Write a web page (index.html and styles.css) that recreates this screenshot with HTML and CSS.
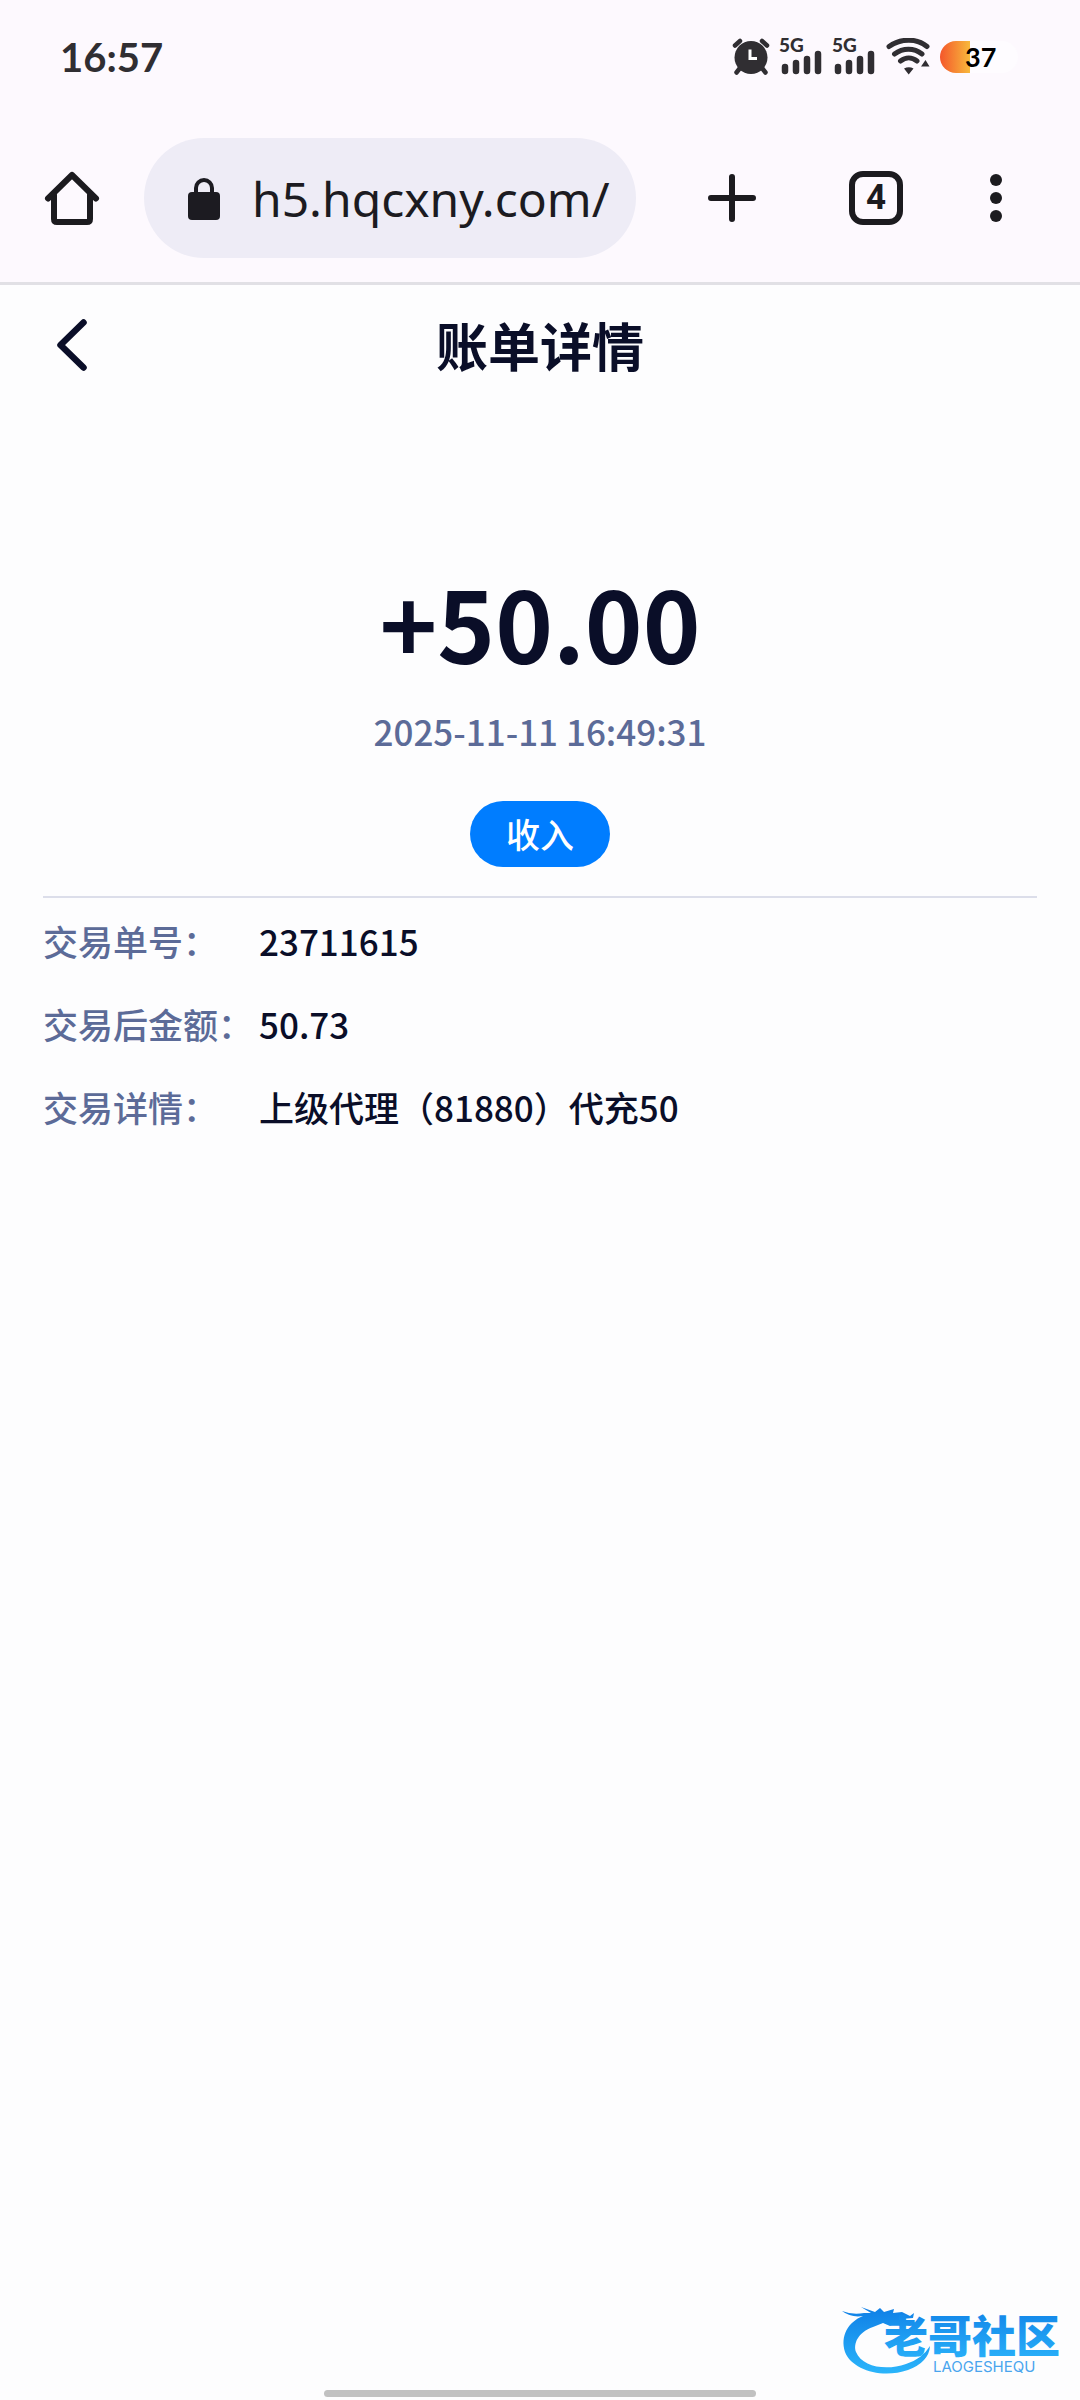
FILE: index.html
```html
<!DOCTYPE html>
<html lang="zh-CN">
<head>
<meta charset="utf-8">
<meta name="viewport" content="width=device-width, initial-scale=1">
<title>账单详情</title>
<link rel="stylesheet" href="styles.css">
</head>
<body>
<header class="browser">
  <div class="status">
    <time class="clock">16:57</time>
    <div class="indicators">
      <svg width="38" height="38" viewBox="0 0 38 38" aria-label="闹钟">
        <g stroke="#302e32" stroke-width="4.500" stroke-linecap="round" fill="none">
          <path d="M3 7.500L8 3M35 7.500L30 3M8 30L4.500 34.500M30 30L33.500 34.500"/>
        </g>
        <circle cx="19" cy="19.500" r="16.500" fill="#302e32"/>
        <path d="M18 11.500V20.500H25" fill="none" stroke="#fff" stroke-width="3"/>
      </svg>
      <svg class="signal" width="43" height="54" viewBox="0 -8 43 54" aria-label="5G信号">
        <text class="net" x="-1" y="14">5G</text>
        <path d="M5 29V33M16 25V33M27 21V33M38 16V33" stroke="#302e32" stroke-width="6.500" stroke-linecap="round"/>
      </svg>
      <svg class="signal" width="43" height="54" viewBox="0 -8 43 54" aria-label="5G信号">
        <text class="net" x="-1" y="14">5G</text>
        <path d="M5 29V33M16 25V33M27 21V33M38 16V33" stroke="#302e32" stroke-width="6.500" stroke-linecap="round"/>
      </svg>
      <svg width="44" height="38" viewBox="0 0 44 38" aria-label="无线网络">
        <g stroke="#302e32" stroke-width="5" stroke-linecap="round" fill="none">
          <path d="M3 8.500C15 0 31 0 41 8.500M8.500 16C17 9.500 28 9.500 36 16M14.500 23C19.500 19 26 19 31 23"/>
        </g>
        <path d="M18 30.500Q23 28 27.500 30.500L22.700 36.500ZM35 28.500L39.500 22L43.500 28.500Z" fill="#302e32"/>
      </svg>
      <div class="battery"><span class="charge"></span><span class="percent">37</span></div>
    </div>
  </div>
  <nav class="toolbar">
    <button class="tool home" aria-label="主页">
      <svg width="56" height="56" viewBox="0 0 56 56" fill="none" stroke="#1c1b1f" stroke-width="6" stroke-linecap="round" stroke-linejoin="round">
        <path d="M4 28.500L28 5L52 28.500"/><path d="M10 25V49Q10 52 13 52H43Q46 52 46 49V25"/>
      </svg>
    </button>
    <label class="address">
      <svg width="32" height="42" viewBox="0 0 32 42" aria-label="安全连接">
        <rect y="14" width="32" height="28" rx="4" fill="#1c1b21"/>
        <path d="M8 16V10A8 8 0 0 1 24 10V16" fill="none" stroke="#1c1b21" stroke-width="4"/>
      </svg>
      <input class="url" type="text" value="h5.hqcxny.com/" aria-label="网址">
    </label>
    <button class="tool" aria-label="新标签页">
      <svg width="48" height="48" viewBox="0 0 48 48" stroke="#1c1b1f" stroke-width="6" stroke-linecap="round"><path d="M24 3V45M3 24H45"/></svg>
    </button>
    <button class="tool" aria-label="标签页"><span class="tabs">4</span></button>
    <button class="tool menu" aria-label="菜单">
      <svg width="12" height="48" viewBox="0 0 12 48" fill="#1c1b1f"><circle cx="6" cy="6" r="6"/><circle cx="6" cy="24" r="6"/><circle cx="6" cy="42" r="6"/></svg>
    </button>
  </nav>
</header>

<main class="page">
  <div class="titlebar">
    <button class="tool back" aria-label="返回">
      <svg width="34" height="52" viewBox="0 0 34 52" fill="none" stroke="#0a0e28" stroke-width="6.500" stroke-linecap="round" stroke-linejoin="round"><path d="M28.500 3.500L5.500 26L28.500 48.500"/></svg>
    </button>
    <h1 class="title">账单详情</h1>
  </div>
  <section class="summary">
    <p class="amount">+50.00</p>
    <time class="date">2025-11-11 16:49:31</time>
    <span class="kind">收入</span>
  </section>
  <dl class="details">
    <div class="row"><dt>交易单号：</dt><dd>23711615</dd></div>
    <div class="row"><dt>交易后金额：</dt><dd>50.73</dd></div>
    <div class="row"><dt>交易详情：</dt><dd>上级代理（81880）代充50</dd></div>
  </dl>
</main>

<footer class="gesture"><span class="handle"></span></footer>

<svg class="watermark" width="228" height="90" viewBox="0 -10 228 90" aria-label="老哥社区">
  <defs>
    <linearGradient id="blue" x1="0" y1="0" x2="0" y2="1"><stop offset="0" stop-color="#0f7fe6"/><stop offset="1" stop-color="#2bb5fb"/></linearGradient>
  </defs>
  <path fill="url(#blue)" d="M2 9Q12 13 24 11L31 11L21 5L35 10L40 6L44 10L54 7L53 11L62 10L70 14L74 11L73 16L61 17L73 21L70 24L57 20L50 24L43 21L33 25C18 30 13 42 16 50C22 65 46 69 66 62Q82 57 90 44Q89 60 68 68C42 77 12 68 5 50C0 34 8 20 23 14Q11 16 2 9Z"/>
  <text class="brand" x="44" y="51">老哥社区</text>
  <text class="latin" x="93" y="70">LAOGESHEQU</text>
</svg>
</body>
</html>
```
FILE: styles.css
```css
* { box-sizing: border-box; }

body {
  margin: 0;
  min-height: 100vh;
  display: flex;
  flex-direction: column;
  position: relative;
  background: #fdfdfe;
  color: #0a0e28;
  font-family: "Noto Sans CJK SC", sans-serif;
}

h1, p, dl, dd { margin: 0; }

button {
  border: 0;
  padding: 0;
  background: none;
  color: inherit;
}

svg { display: block; flex: none; }

.browser {
  background: #fdf9fe;
  border-bottom: 3px solid #e1e0e5;
}

.status {
  height: 114px;
  padding: 0 62px 0 60px;
  display: flex;
  align-items: center;
  justify-content: space-between;
}

.clock {
  font: 700 40px/48px Lato, sans-serif;
  color: #302e32;
}

.indicators {
  display: flex;
  align-items: center;
  gap: 10px;
}

.signal { overflow: visible; }

.net {
  font: 900 19px Lato, sans-serif;
  fill: #302e32;
}

.battery {
  width: 78px;
  height: 32px;
  display: flex;
  align-items: center;
  border-radius: 16px;
  overflow: hidden;
  background: #fefcff;
}

.charge {
  width: 30px;
  height: 32px;
  background: linear-gradient(90deg, #f4572b, #f8b93c);
}

.percent {
  margin-left: -5px;
  font: 700 27px/32px Lato, sans-serif;
  color: #000;
}

.toolbar {
  height: 168px;
  padding: 0 36px 0 0;
  display: flex;
  align-items: center;
}

.tool {
  width: 144px;
  height: 96px;
  flex: none;
  display: flex;
  align-items: center;
  justify-content: center;
}

.menu { width: 96px; }

.address {
  flex: 1;
  min-width: 0;
  height: 120px;
  margin-right: 24px;
  padding: 2px 16px 0 44px;
  display: flex;
  align-items: center;
  gap: 32px;
  border-radius: 60px;
  background: #eeecf6;
}

.url {
  flex: 1;
  min-width: 0;
  border: 0;
  padding: 0;
  background: none;
  color: #1c1b21;
  font: 400 48px/72px "Noto Sans", sans-serif;
}

.tabs {
  width: 54px;
  height: 54px;
  border: 6px solid #1c1b1f;
  border-radius: 14px;
  color: #1c1b1f;
  font: 700 35px/42px "Liberation Sans Narrow", Roboto, sans-serif;
  text-align: center;
}

.page { flex: 1; }

.titlebar {
  height: 120px;
  display: grid;
  grid-template-columns: 144px 1fr 144px;
  align-items: center;
}

.title {
  font-size: 52px;
  line-height: 76px;
  font-weight: 700;
  text-align: center;
}

.summary {
  margin: 0 43px;
  padding: 142px 0 29px;
  display: flex;
  flex-direction: column;
  align-items: center;
  border-bottom: 2px solid #dcdeea;
}

.amount {
  font-size: 98px;
  line-height: 148px;
  font-weight: 700;
}

.date {
  margin-top: 10px;
  font-size: 35px;
  line-height: 52px;
  font-weight: 500;
  color: #5c6b98;
}

.kind {
  margin-top: 44px;
  padding: 0 36px;
  border-radius: 33px;
  background: #007dff;
  color: #fff;
  font-size: 34px;
  line-height: 66px;
  font-weight: 500;
}

.details {
  margin: 0 43px;
  padding-top: 1px;
}

.row {
  display: flex;
  font-size: 35px;
  line-height: 83px;
  font-weight: 500;
}

.row dt {
  width: 216px;
  flex: none;
  color: #5c6b98;
}

.gesture {
  height: 10px;
  display: flex;
  justify-content: center;
}

.handle {
  width: 40%;
  height: 7px;
  border-radius: 4px;
  background: #c1c1c1;
}

.watermark {
  position: absolute;
  right: 12px;
  bottom: 18px;
}

.brand {
  font: 900 44px "Noto Sans CJK SC", sans-serif;
  fill: url(#blue);
}

.latin {
  font: 400 15px Inter, sans-serif;
  fill: #4aa5ee;
}
```
